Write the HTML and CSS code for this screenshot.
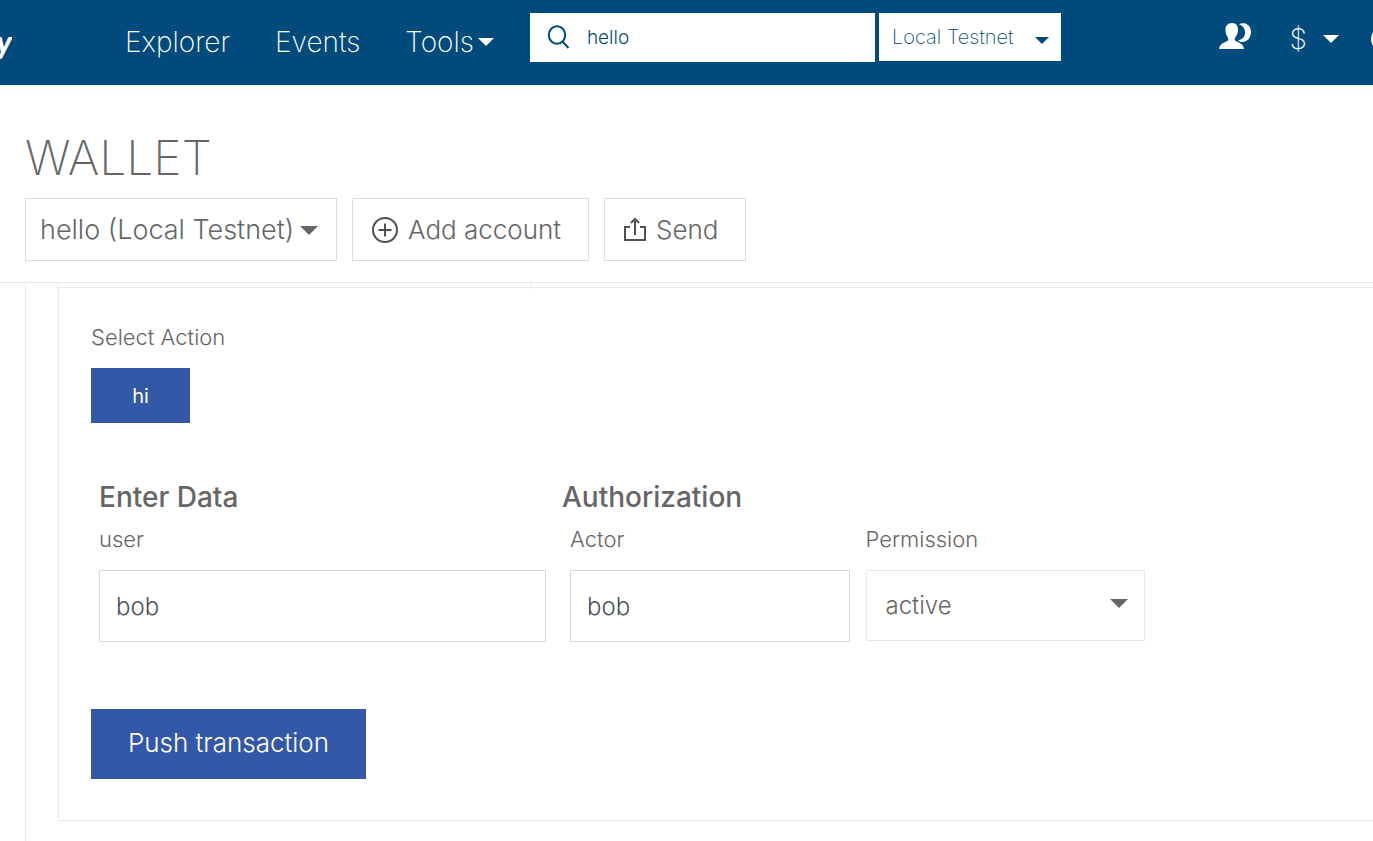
FILE: index.html
```html
<!DOCTYPE html>
<html lang="en">
<head>
<meta charset="utf-8">
<title>Wallet</title>
<link rel="stylesheet" href="styles.css">
</head>
<body>
<header class="topbar">
  <a class="logo" href="#">y</a>
  <nav class="nav">
    <a href="#">Explorer</a>
    <a href="#">Events</a>
    <a href="#">Tools <svg class="caret" viewBox="0 0 16 8"><path d="M0 0h16L8 8z"/></svg></a>
  </nav>
  <form class="search">
    <div class="search-box">
      <svg class="search-icon" viewBox="0 0 24 26"><ellipse cx="10" cy="10" rx="8.200" ry="8.800"/><path d="M15.500 16.500l6 6.500"/></svg>
      <input type="text" aria-label="Search" value="hello">
    </div>
    <div class="pick network">
      <select aria-label="Network"><option>Local Testnet</option></select>
      <svg class="caret" viewBox="0 0 16 8"><path d="M0 0h16L8 8z"/></svg>
    </div>
  </form>
  <div class="tools">
    <button class="people" aria-label="Accounts"><svg viewBox="0 0 33 27"><path d="M13 0C8.500 0 6.500 3 6.500 7c0 3 .8 5.500 2.200 7.200 1 1.500.8 3.300-.7 4.100C4.500 20 .8 20.800 0 26h25c-.8-5.200-4.500-6-8-7.700-1.500-.8-1.700-2.600-.7-4.100 1.700-1.700 2.700-4.200 2.700-7.200 0-4-1.500-7-6-7z"/><path d="M20 1.200c4-2.400 12-.8 12 7.800 0 8-7 11.500-12 9.300l-.8-.9C24 16.500 26.500 13 26 8.500 25.600 5 23.500 2.400 20 1.200z"/></svg></button>
    <button class="currency">$ <svg class="caret" viewBox="0 0 16 8"><path d="M0 0h16L8 8z"/></svg></button>
    <button class="globe" aria-label="Language"><svg viewBox="0 0 24 24"><circle cx="12" cy="12" r="11"/></svg></button>
  </div>
</header>
<main class="page">
  <section class="wallet-head">
    <h1>WALLET</h1>
    <div class="actions">
      <div class="pick account">
        <select aria-label="Account"><option>hello (Local Testnet)</option></select>
        <svg class="caret" viewBox="0 0 18 9"><path d="M0 0h18L9 9z"/></svg>
      </div>
      <button class="action add"><svg viewBox="0 0 26 26"><circle cx="13" cy="13" r="12"/><path d="M13 6.500v13M6.500 13h13"/></svg>Add account</button>
      <button class="action send"><svg viewBox="0 0 24 26"><path d="M7 10H2v13h20V10h-5M12 18V4"/><path d="M8 6l4-4 4 4"/></svg>Send</button>
    </div>
  </section>
  <section class="wallet-body">
    <div class="tab-edge"></div>
    <form class="panel">
      <p class="label">Select Action</p>
      <button type="button" class="primary choice">hi</button>
      <div class="groups">
        <section class="group">
          <h2>Enter Data</h2>
          <div class="fields">
            <div class="field"><label for="user">user</label><input id="user" type="text" value="bob"></div>
          </div>
        </section>
        <section class="group auth">
          <h2>Authorization</h2>
          <div class="fields">
            <div class="field"><label for="actor">Actor</label><input id="actor" type="text" value="bob"></div>
            <div class="field"><label for="permission">Permission</label>
              <div class="pick permission"><select id="permission"><option>active</option></select>
              <svg class="caret" viewBox="0 0 18 9"><path d="M0 0h18L9 9z"/></svg></div>
            </div>
          </div>
        </section>
      </div>
      <button type="button" class="primary push">Push transaction</button>
    </form>
  </section>
</main>
</body>
</html>
```
FILE: styles.css
```css
* { box-sizing: border-box; }
body {
  margin: 0;
  min-height: 100vh;
  display: flex;
  flex-direction: column;
  overflow-x: hidden;
  background: #fff;
  color: #666;
  font-family: Inter, "Open Sans", sans-serif;
  font-weight: 300;
}
h1, h2, p { margin: 0; }
button, input, select { font: inherit; color: inherit; border-radius: 0; }
button { border: 0; background: none; padding: 0; cursor: pointer; }
svg { display: block; flex: none; }
select { appearance: none; width: 100%; background: #fff; outline: 0; }
.caret { width: 16px; height: 8px; fill: currentColor; }

.topbar {
  display: flex;
  height: 85px;
  overflow: hidden;
  background: #004b7c;
  color: #fff;
}
.logo {
  width: 12px;
  flex: none;
  display: flex;
  justify-content: flex-end;
  overflow: hidden;
  color: #fff;
  font: italic 900 32px/84px Lato, sans-serif;
  text-decoration: none;
}
.nav { display: flex; gap: 45px; margin-left: 113px; flex: none; }
.nav a {
  display: flex;
  align-items: center;
  gap: 4px;
  height: 83px;
  color: #fff;
  font-size: 28px;
  font-weight: 200;
  text-decoration: none;
}
.search {
  display: flex;
  align-items: flex-start;
  gap: 4px;
  flex: none;
  margin: 13px 0 0 36px;
  color: #004b7c;
}
.search-box {
  display: flex;
  align-items: center;
  width: 345px;
  height: 49px;
  padding-left: 17px;
  background: #fff;
}
.search-icon { width: 24px; height: 26px; fill: none; stroke: currentColor; stroke-width: 2; }
.search-box input {
  flex: 1;
  min-width: 0;
  height: 48px;
  border: 0;
  padding: 0 16px;
  background: none;
  font-size: 19px;
  outline: 0;
}
.pick { position: relative; }
.pick .caret { position: absolute; pointer-events: none; }
.network { width: 182px; }
.network select { height: 48px; border: 0; padding: 0 13px; font-size: 20px; font-weight: 200; color: #004b7c; }
.network .caret { right: 12px; top: 24px; width: 14px; height: 7px; }
.tools { display: flex; align-items: center; height: 77px; margin-left: auto; margin-right: -22px; flex: none; }
.people svg { width: 33px; height: 27px; fill: #fff; }
.people { margin: 0 38px 4px 0; }
.currency { display: flex; align-items: center; gap: 16px; font-size: 28px; font-weight: 200; margin-right: 32px; }
.globe svg { width: 24px; height: 24px; fill: none; stroke: #fff; stroke-width: 2; }

.page { flex: 1; display: flex; flex-direction: column; }
.wallet-head { padding: 45px 25px 21px; border-bottom: 1px solid #e8e8e8; }
h1 { font-size: 48px; line-height: 56px; font-weight: 200; margin-bottom: 12px; }
.actions { display: flex; gap: 15px; font-size: 26px; }
.account { width: 312px; }
.account select { height: 63px; padding: 0 14px; border: 1px solid #ddd; font-size: 27px; }
.account .caret { right: 19px; top: 28px; width: 18px; height: 9px; }
.action {
  display: flex;
  align-items: center;
  gap: 10px;
  height: 63px;
  padding: 0 19px;
  border: 1px solid #ddd;
  white-space: nowrap;
}
.action svg { width: 26px; height: 26px; fill: none; stroke: #505050; stroke-width: 2; }
.add { width: 237px; }
.send { width: 142px; padding: 0 17px; gap: 8px; }

.wallet-body { flex: 1; margin-left: 25px; padding: 0 0 20px 32px; border-left: 1px solid #e8e8e8; overflow: hidden; }
.tab-edge {
  width: 474px;
  height: 7px;
  margin: 0 0 -3px -1px;
  border: solid #e8e8e8;
  border-width: 0 1px;
}
.panel {
  padding: 33px 0 41px 32px;
  border: solid #e8e8e8;
  border-width: 1px 0 1px 1px;
}
.label, .field label { display: block; font-size: 22px; line-height: 32px; }
.primary { display: block; background: #3458a8; color: #fff; }
.choice { width: 99px; height: 55px; margin-top: 15px; font-size: 20px; font-weight: 400; }
.groups { display: grid; grid-template-columns: 463fr 599fr; margin: 58px 220px 67px 0; }
.group { padding: 0 8px; }
.auth { padding-right: 0; }
.auth .fields { padding: 0 8px; }
h2 { font-size: 28px; line-height: 32px; font-weight: 500; margin-bottom: 10px; }
.fields { display: flex; gap: 16px; }
.field { flex: 1; min-width: 0; }
.field input {
  display: block;
  width: 100%;
  height: 72px;
  margin-top: 15px;
  padding: 0 16px;
  border: 1px solid #d8d8d8;
  color: #495057;
  font-size: 24px;
  outline: 0;
}
.permission { margin-top: 15px; }
.permission select { display: block; height: 71px; padding: 0 19px; border: 1px solid #e8e8e8; font-size: 24px; }
.permission .caret { right: 17px; top: 29px; width: 18px; height: 9px; }
.push { width: 275px; height: 70px; padding-bottom: 3px; font-size: 26px; }
```
